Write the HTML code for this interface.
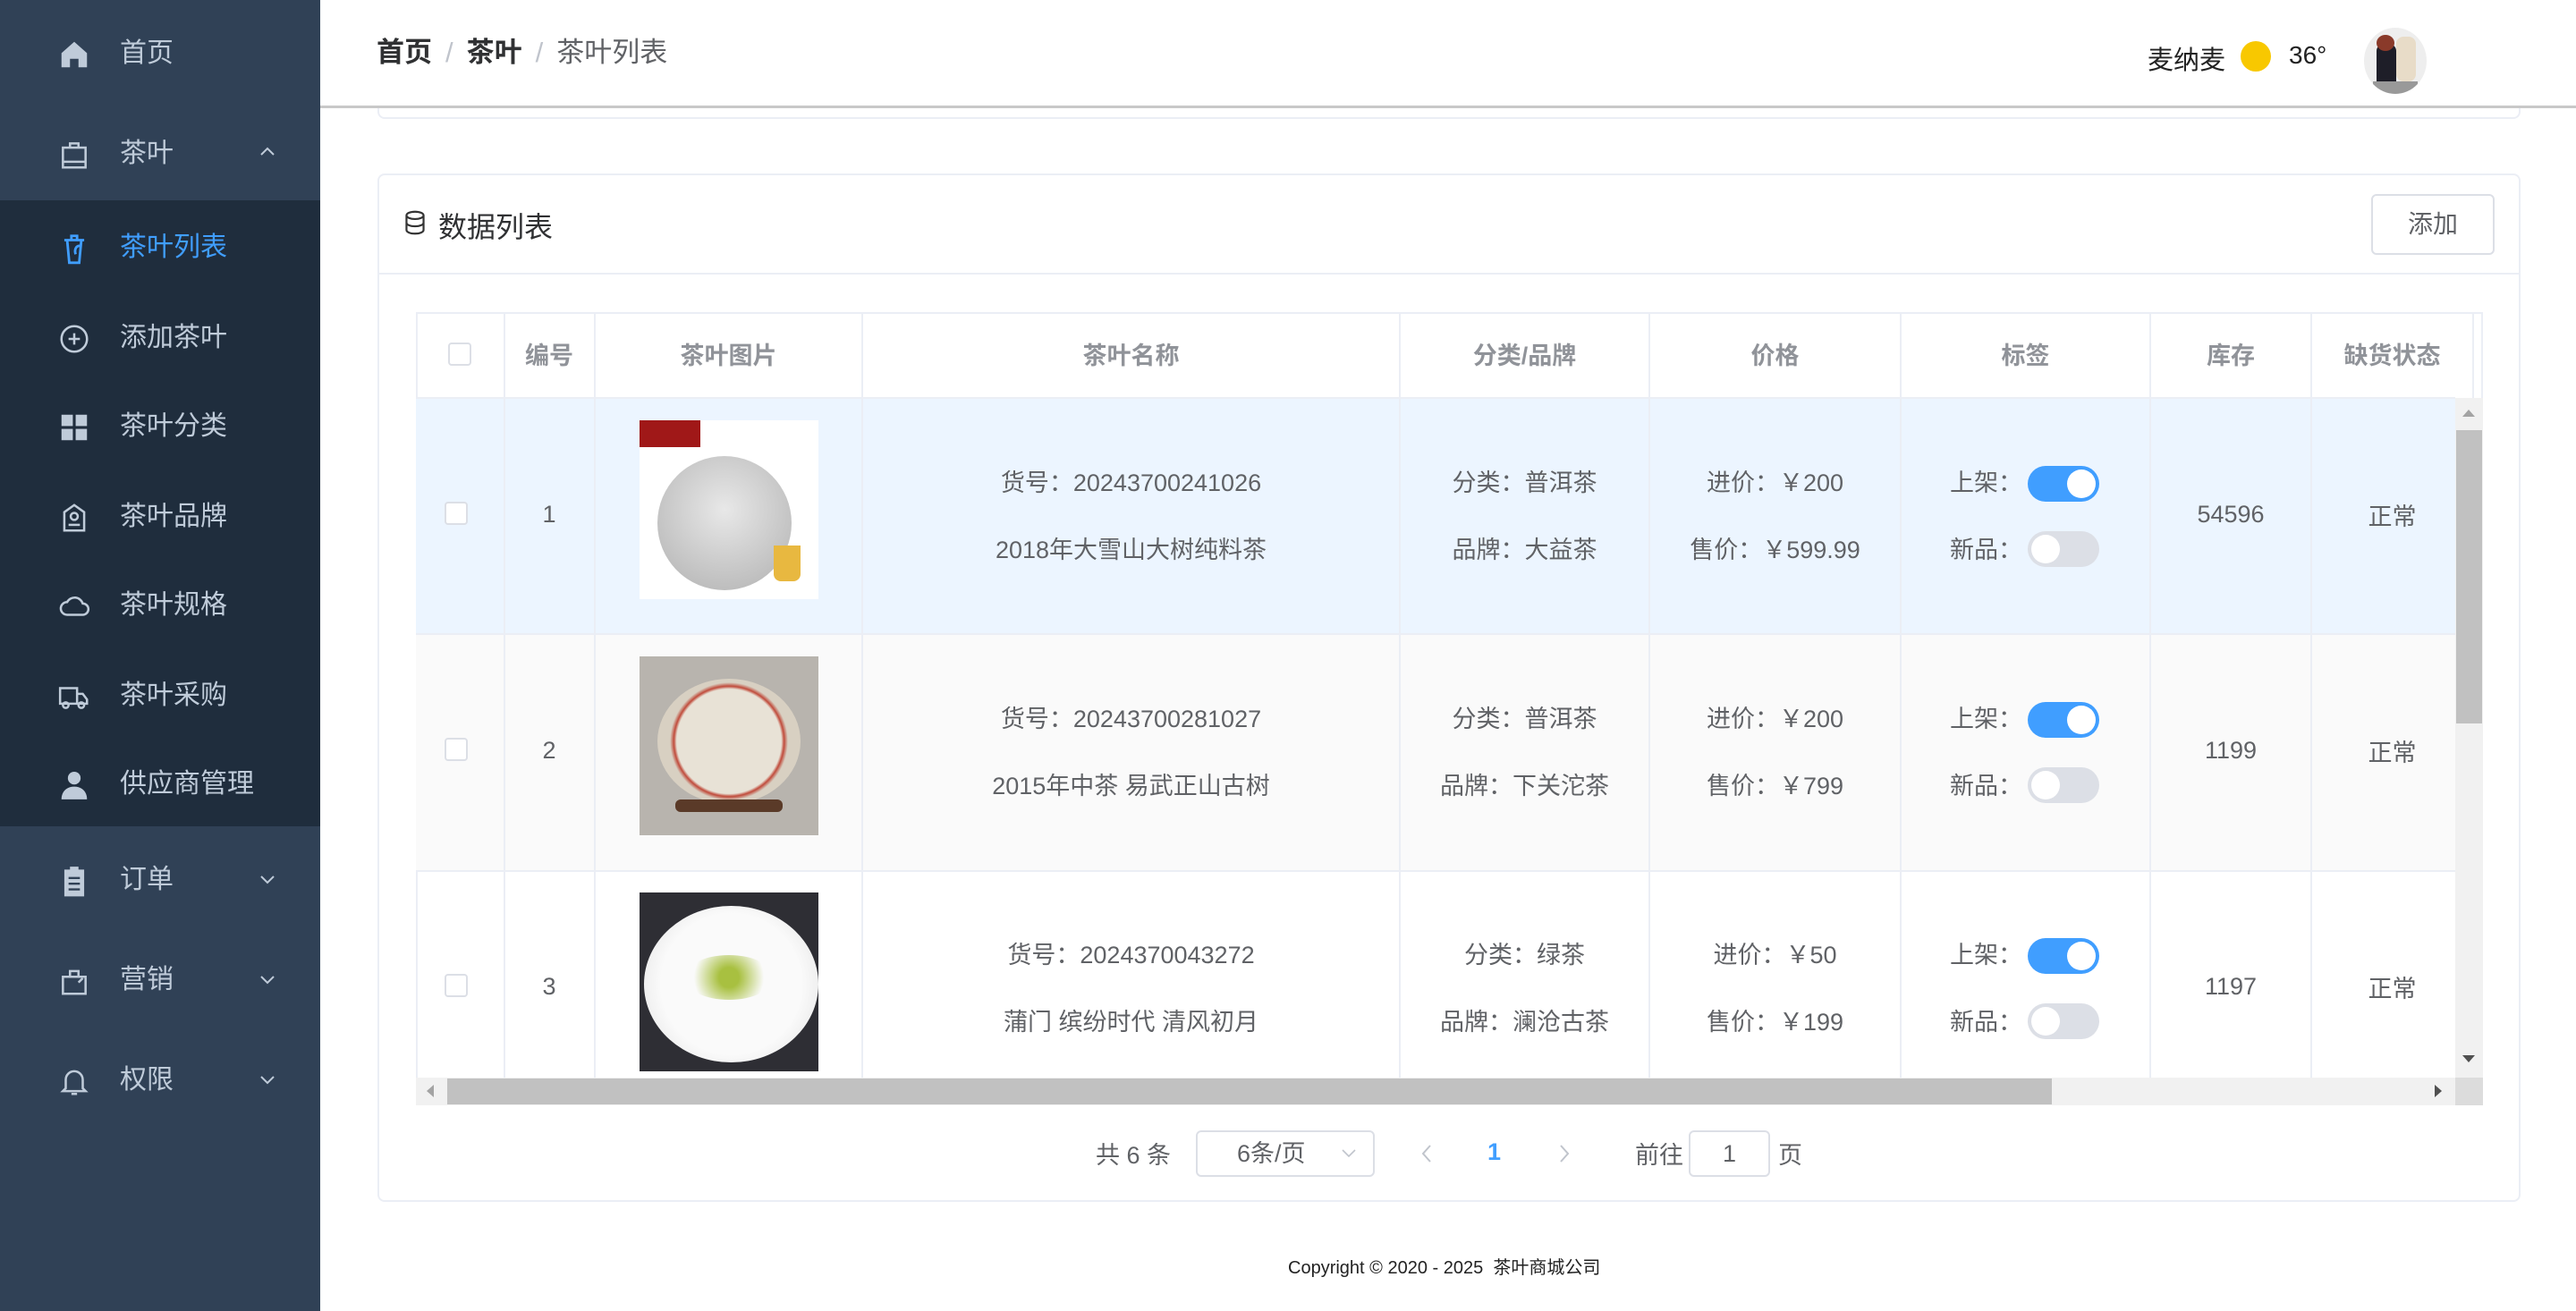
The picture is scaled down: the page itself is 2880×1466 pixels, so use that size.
<!DOCTYPE html>
<html><head><meta charset="utf-8"><style>
*{margin:0;padding:0;box-sizing:border-box}
body{width:2880px;height:1466px;position:relative;overflow:hidden;background:#fff;font-family:"Liberation Sans","Noto Sans CJK SC",sans-serif;color:#606266}
.a{position:absolute}
.side{left:0;top:0;width:358px;height:1466px;background:#304156}
.sub{left:0;top:224px;width:358px;height:700px;background:#1f2d3d}
.mi{position:absolute;left:0;width:358px;height:40px;color:#bfcbd9;font-size:30px;line-height:40px}
.mi .t{position:absolute;left:134px;top:0}
.mi svg{position:absolute;left:64px;top:2px}
.mi .ar{position:absolute;left:296px;top:2px}
.hd{left:358px;top:0;width:2522px;height:121px;background:#fff;border-bottom:3px solid #c8c8c8}
.c{position:absolute;text-align:center;font-size:27px;white-space:nowrap}
.vl{position:absolute;top:349px;width:2px;background:#ebeef5;height:856px}
.hl{position:absolute;left:465px;width:2280px;height:2px;background:#ebeef5}
.th{position:absolute;top:376px;text-align:center;font-size:27px;font-weight:bold;color:#909399}
.cb{position:absolute;width:26px;height:26px;border:2px solid #dcdfe6;border-radius:4px;background:#fff}
.sw{position:absolute;width:80px;height:40px;border-radius:20px}
.sw.on{background:#409eff}.sw.off{background:#dcdfe6}
.sw i{position:absolute;top:4px;width:32px;height:32px;border-radius:50%;background:#fff}
.sw.on i{left:44px}.sw.off i{left:4px}
</style></head><body>
<div class="a side"></div>
<div class="a sub"></div>

<div class="mi" style="top:40px"><svg width="38" height="38" viewBox="0 0 24 24"><path d="M3 11L12 3l9 8v10h-6v-6H9v6H3z" fill="#bfcbd9"/></svg><span class="t">首页</span></div>
<div class="mi" style="top:152px"><svg width="38" height="38" viewBox="0 0 24 24" fill="none" stroke="#bfcbd9" stroke-width="1.6"><rect x="4" y="7" width="16" height="14"/><path d="M9 7V4h6v3M4 17h16"/></svg><span class="t">茶叶</span><svg class="ar" style="left:286px;top:8px" width="26" height="20" viewBox="0 0 26 20"><path d="M6 13l7-7 7 7" fill="none" stroke="#bfcbd9" stroke-width="2"/></svg></div>
<div class="mi" style="top:257px;color:#409eff"><svg width="38" height="38" viewBox="0 0 24 24" fill="none" stroke="#409eff" stroke-width="1.8"><path d="M5 6h14M7 6l1.5 16h7L17 6M10 6V3h4v3M16 10c-3 0-4 3-3 6"/></svg><span class="t">茶叶列表</span></div>
<div class="mi" style="top:358px"><svg width="38" height="38" viewBox="0 0 24 24" fill="none" stroke="#bfcbd9" stroke-width="1.6"><circle cx="12" cy="12" r="9"/><path d="M12 8v8M8 12h8"/></svg><span class="t">添加茶叶</span></div>
<div class="mi" style="top:457px"><svg width="38" height="38" viewBox="0 0 24 24" fill="#bfcbd9"><rect x="3" y="3" width="8" height="8"/><rect x="13" y="3" width="8" height="8"/><rect x="3" y="13" width="8" height="8"/><rect x="13" y="13" width="8" height="8"/></svg><span class="t">茶叶分类</span></div>
<div class="mi" style="top:558px"><svg width="38" height="38" viewBox="0 0 24 24" fill="none" stroke="#bfcbd9" stroke-width="1.6"><path d="M5 8l7-5 7 5v13H5z"/><circle cx="12" cy="11" r="2.5"/><path d="M8 17h8"/></svg><span class="t">茶叶品牌</span></div>
<div class="mi" style="top:657px"><svg width="38" height="38" viewBox="0 0 24 24" fill="none" stroke="#bfcbd9" stroke-width="1.6"><path d="M7 18h11a4 4 0 0 0 0-8 6 6 0 0 0-11-1 4.5 4.5 0 0 0 0 9z"/></svg><span class="t">茶叶规格</span></div>
<div class="mi" style="top:758px"><svg width="38" height="38" viewBox="0 0 24 24" fill="none" stroke="#bfcbd9" stroke-width="1.6"><path d="M2 6h12v11H2zM14 10h4l3 4v3h-7"/><circle cx="6" cy="18" r="2"/><circle cx="17" cy="18" r="2"/></svg><span class="t">茶叶采购</span></div>
<div class="mi" style="top:857px"><svg width="38" height="38" viewBox="0 0 24 24" fill="#bfcbd9"><circle cx="12" cy="7" r="4.5"/><path d="M3 22c0-6 4-9 9-9s9 3 9 9z"/></svg><span class="t">供应商管理</span></div>
<div class="mi" style="top:964px"><svg width="38" height="38" viewBox="0 0 24 24" fill="#bfcbd9"><path d="M5 4h4V2h6v2h4v19H5z"/><path d="M8 10h8M8 14h8M8 18h8" stroke="#304156" stroke-width="1.5"/></svg><span class="t">订单</span><svg class="ar" style="left:286px;top:10px" width="26" height="20" viewBox="0 0 26 20"><path d="M6 6l7 7 7-7" fill="none" stroke="#bfcbd9" stroke-width="2"/></svg></div>
<div class="mi" style="top:1076px"><svg width="38" height="38" viewBox="0 0 24 24" fill="none" stroke="#bfcbd9" stroke-width="1.6"><path d="M4 9h16v12H4zM9 9V5h6v4M15 13l3-3"/></svg><span class="t">营销</span><svg class="ar" style="left:286px;top:10px" width="26" height="20" viewBox="0 0 26 20"><path d="M6 6l7 7 7-7" fill="none" stroke="#bfcbd9" stroke-width="2"/></svg></div>
<div class="mi" style="top:1188px"><svg width="38" height="38" viewBox="0 0 24 24" fill="none" stroke="#bfcbd9" stroke-width="1.6"><path d="M6 17V11a6 6 0 0 1 12 0v6l2 2H4zM10 21h4"/></svg><span class="t">权限</span><svg class="ar" style="left:286px;top:10px" width="26" height="20" viewBox="0 0 26 20"><path d="M6 6l7 7 7-7" fill="none" stroke="#bfcbd9" stroke-width="2"/></svg></div>

<div class="a" style="left:422px;top:60px;width:2396px;height:73px;border:2px solid #ebeef5;border-top:none;border-radius:0 0 8px 8px"></div>
<div class="a hd"></div>
<div class="a" style="left:421px;top:39px;font-size:31px;line-height:40px;white-space:nowrap"><b style="color:#303133">首页</b><span style="color:#c0c4cc;margin:0 15px">/</span><b style="color:#303133">茶叶</b><span style="color:#c0c4cc;margin:0 15px">/</span><span style="color:#606266">茶叶列表</span></div>
<div class="a" style="left:2401px;top:44px;font-size:29px;color:#222">麦纳麦</div>
<div class="a" style="left:2505px;top:46px;width:34px;height:34px;border-radius:50%;background:#f8c800"></div>
<div class="a" style="left:2559px;top:46px;font-size:28px;color:#222">36°</div>
<div class="a" style="left:2643px;top:31px;width:70px;height:74px;border-radius:50%;background:#eee;overflow:hidden"><div class="a" style="left:14px;top:18px;width:22px;height:50px;background:#1e1e28;border-radius:8px"></div><div class="a" style="left:14px;top:8px;width:20px;height:18px;background:#8a3a2a;border-radius:50%"></div><div class="a" style="left:36px;top:10px;width:22px;height:50px;background:#e8dcc8;border-radius:8px"></div><div class="a" style="left:10px;top:60px;width:50px;height:14px;background:#999"></div></div>

<div class="a" style="left:422px;top:194px;width:2396px;height:1150px;border:2px solid #ebeef5;border-radius:8px"></div>
<div class="a" style="left:422px;top:305px;width:2396px;height:2px;background:#ebeef5"></div>
<svg class="a" style="left:450px;top:234px" width="28" height="30" viewBox="0 0 20 22" fill="none" stroke="#333" stroke-width="1.6"><ellipse cx="10" cy="5" rx="7" ry="3"/><path d="M3 5v12c0 1.7 3 3 7 3s7-1.3 7-3V5M3 11c0 1.7 3 3 7 3s7-1.3 7-3"/></svg>
<div class="a" style="left:490px;top:229px;font-size:32px;color:#303133">数据列表</div>
<div class="a" style="left:2651px;top:217px;width:138px;height:68px;border:2px solid #dcdfe6;border-radius:6px;font-size:28px;line-height:64px;text-align:center;color:#606266">添加</div>

<div class="a" style="left:465px;top:349px;width:2311px;height:887px;border:2px solid #ebeef5;border-bottom:none"></div>
<div class="a" style="left:465px;top:445px;width:2280px;height:264px;background:#ecf5ff"></div>
<div class="a" style="left:465px;top:709px;width:2280px;height:265px;background:#fafafa"></div>
<div class="hl" style="top:444px"></div><div class="hl" style="top:708px"></div><div class="hl" style="top:973px"></div>
<div class="vl" style="left:563px"></div><div class="vl" style="left:664px"></div><div class="vl" style="left:963px"></div><div class="vl" style="left:1564px"></div><div class="vl" style="left:1843px"></div><div class="vl" style="left:2124px"></div><div class="vl" style="left:2403px"></div><div class="vl" style="left:2583px"></div><div class="vl" style="left:2764px;height:96px"></div>

<div class="cb" style="left:501px;top:383px"></div>
<div class="th" style="left:564px;width:100px">编号</div>
<div class="th" style="left:665px;width:299px">茶叶图片</div>
<div class="th" style="left:964px;width:601px">茶叶名称</div>
<div class="th" style="left:1565px;width:279px">分类/品牌</div>
<div class="th" style="left:1844px;width:281px">价格</div>
<div class="th" style="left:2125px;width:279px">标签</div>
<div class="th" style="left:2404px;width:180px">库存</div>
<div class="th" style="left:2584px;width:181px">缺货状态</div>

<!-- row1 -->
<div class="cb" style="left:497px;top:561px"></div>
<div class="c" style="left:564px;width:100px;top:560px">1</div>
<div class="a" style="left:715px;top:470px;width:200px;height:200px;background:#fff;overflow:hidden"><div class="a" style="left:0;top:0;width:68px;height:30px;background:#a01818"></div><div class="a" style="left:20px;top:40px;width:150px;height:150px;border-radius:50%;background:radial-gradient(circle at 50% 40%,#e8e8e8,#b0b0b0)"></div><div class="a" style="left:150px;top:140px;width:30px;height:40px;background:#e8b840;border-radius:0 0 8px 8px"></div></div>
<div class="c" style="left:964px;width:601px;top:518px">货号：20243700241026</div>
<div class="c" style="left:964px;width:601px;top:593px">2018年大雪山大树纯料茶</div>
<div class="c" style="left:1565px;width:279px;top:518px">分类：普洱茶</div>
<div class="c" style="left:1565px;width:279px;top:593px">品牌：大益茶</div>
<div class="c" style="left:1844px;width:281px;top:518px">进价：￥200</div>
<div class="c" style="left:1844px;width:281px;top:593px">售价：￥599.99</div>
<div class="c" style="left:2180px;top:518px">上架：</div><div class="sw on" style="left:2267px;top:521px"><i></i></div>
<div class="c" style="left:2180px;top:593px">新品：</div><div class="sw off" style="left:2267px;top:594px"><i></i></div>
<div class="c" style="left:2404px;width:180px;top:560px">54596</div>
<div class="c" style="left:2584px;width:181px;top:556px">正常</div>

<!-- row2 -->
<div class="cb" style="left:497px;top:825px"></div>
<div class="c" style="left:564px;width:100px;top:824px">2</div>
<div class="a" style="left:715px;top:734px;width:200px;height:200px;background:#b8b4ae;overflow:hidden"><div class="a" style="left:20px;top:25px;width:160px;height:140px;border-radius:50%;background:radial-gradient(circle,#e8e2d6 55%,#c04a3a 58%,#d8d0c2 62%)"></div><div class="a" style="left:40px;top:160px;width:120px;height:14px;background:#5a3a28;border-radius:6px"></div></div>
<div class="c" style="left:964px;width:601px;top:782px">货号：20243700281027</div>
<div class="c" style="left:964px;width:601px;top:857px">2015年中茶 易武正山古树</div>
<div class="c" style="left:1565px;width:279px;top:782px">分类：普洱茶</div>
<div class="c" style="left:1565px;width:279px;top:857px">品牌：下关沱茶</div>
<div class="c" style="left:1844px;width:281px;top:782px">进价：￥200</div>
<div class="c" style="left:1844px;width:281px;top:857px">售价：￥799</div>
<div class="c" style="left:2180px;top:782px">上架：</div><div class="sw on" style="left:2267px;top:785px"><i></i></div>
<div class="c" style="left:2180px;top:857px">新品：</div><div class="sw off" style="left:2267px;top:858px"><i></i></div>
<div class="c" style="left:2404px;width:180px;top:824px">1199</div>
<div class="c" style="left:2584px;width:181px;top:820px">正常</div>

<!-- row3 -->
<div class="cb" style="left:497px;top:1089px"></div>
<div class="c" style="left:564px;width:100px;top:1088px">3</div>
<div class="a" style="left:715px;top:998px;width:200px;height:200px;background:#2e2e34;overflow:hidden"><div class="a" style="left:5px;top:15px;width:195px;height:175px;border-radius:50%;background:radial-gradient(circle,#fafafa 60%,#ddd)"></div><div class="a" style="left:50px;top:70px;width:100px;height:50px;border-radius:50%;background:radial-gradient(circle,#a8c040 20%,transparent 70%)"></div></div>
<div class="c" style="left:964px;width:601px;top:1046px">货号：2024370043272</div>
<div class="c" style="left:964px;width:601px;top:1121px">蒲门 缤纷时代 清风初月</div>
<div class="c" style="left:1565px;width:279px;top:1046px">分类：绿茶</div>
<div class="c" style="left:1565px;width:279px;top:1121px">品牌：澜沧古茶</div>
<div class="c" style="left:1844px;width:281px;top:1046px">进价：￥50</div>
<div class="c" style="left:1844px;width:281px;top:1121px">售价：￥199</div>
<div class="c" style="left:2180px;top:1046px">上架：</div><div class="sw on" style="left:2267px;top:1049px"><i></i></div>
<div class="c" style="left:2180px;top:1121px">新品：</div><div class="sw off" style="left:2267px;top:1122px"><i></i></div>
<div class="c" style="left:2404px;width:180px;top:1088px">1197</div>
<div class="c" style="left:2584px;width:181px;top:1084px">正常</div>

<div class="a" style="left:2745px;top:445px;width:31px;height:760px;background:#f1f1f1"></div>
<div class="a" style="left:2746px;top:481px;width:29px;height:328px;background:#c1c1c1"></div>
<div class="a" style="left:2753px;top:458px;width:0;height:0;border:7px solid transparent;border-bottom:8px solid #a3a3a3;border-top:none"></div>
<div class="a" style="left:2753px;top:1180px;width:0;height:0;border:7px solid transparent;border-top:8px solid #505050;border-bottom:none"></div>
<div class="a" style="left:465px;top:1205px;width:2311px;height:31px;background:#f1f1f1"></div>
<div class="a" style="left:500px;top:1206px;width:1794px;height:29px;background:#c1c1c1"></div>
<div class="a" style="left:2745px;top:1205px;width:31px;height:31px;background:#dcdcdc"></div>
<div class="a" style="left:477px;top:1213px;width:0;height:0;border:7px solid transparent;border-right:8px solid #a3a3a3;border-left:none"></div>
<div class="a" style="left:2722px;top:1213px;width:0;height:0;border:7px solid transparent;border-left:8px solid #505050;border-right:none"></div>

<div class="a" style="left:1225px;top:1270px;font-size:27px;color:#606266">共 6 条</div>
<div class="a" style="left:1337px;top:1264px;width:200px;height:52px;border:2px solid #dcdfe6;border-radius:6px;font-size:27px;line-height:48px;padding-left:44px;color:#606266">6条/页<svg class="a" style="left:160px;top:18px" width="18" height="12" viewBox="0 0 18 12"><path d="M2 2l7 7 7-7" fill="none" stroke="#c0c4cc" stroke-width="1.6"/></svg></div>
<svg class="a" style="left:1588px;top:1278px" width="14" height="24" viewBox="0 0 14 24"><path d="M11 3L3 12l8 9" fill="none" stroke="#c0c4cc" stroke-width="2"/></svg>
<div class="a" style="left:1663px;top:1273px;font-size:27px;color:#409eff;font-weight:bold">1</div>
<svg class="a" style="left:1742px;top:1278px" width="14" height="24" viewBox="0 0 14 24"><path d="M3 3l8 9-8 9" fill="none" stroke="#c0c4cc" stroke-width="2"/></svg>
<div class="a" style="left:1828px;top:1270px;font-size:27px">前往</div>
<div class="a" style="left:1888px;top:1264px;width:91px;height:52px;border:2px solid #dcdfe6;border-radius:6px;font-size:27px;line-height:48px;text-align:center">1</div>
<div class="a" style="left:1988px;top:1270px;font-size:27px">页</div>

<div class="a" style="left:1440px;top:1401px;font-size:20px;color:#222;white-space:nowrap">Copyright © 2020 - 2025 &nbsp;茶叶商城公司</div>
</body></html>
